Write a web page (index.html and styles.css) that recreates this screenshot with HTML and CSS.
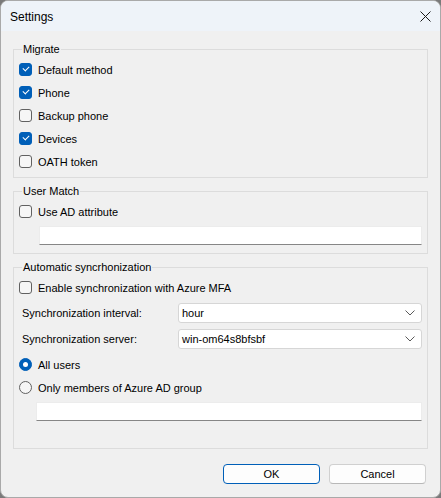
FILE: index.html
```html
<!DOCTYPE html>
<html>
<head>
<meta charset="utf-8">
<link rel="stylesheet" href="styles.css">
</head>
<body>
<div class="window">
  <div class="titlebar">
    <span class="title">Settings</span>
    <svg class="close" width="11" height="11" viewBox="0 0 11 11"><path d="M0.5 0.5 L10.5 10.5 M10.5 0.5 L0.5 10.5" stroke="#1a1a1a" stroke-width="1" fill="none"/></svg>
  </div>
  <div class="content">
    <fieldset class="group migrate">
      <legend>Migrate</legend>
      <label class="row"><span class="cb checked"></span>Default method</label>
      <label class="row"><span class="cb checked"></span>Phone</label>
      <label class="row"><span class="cb"></span>Backup phone</label>
      <label class="row"><span class="cb checked"></span>Devices</label>
      <label class="row"><span class="cb"></span>OATH token</label>
    </fieldset>
    <fieldset class="group match">
      <legend>User Match</legend>
      <label class="row"><span class="cb"></span>Use AD attribute</label>
      <div class="textbox indent20"></div>
    </fieldset>
    <fieldset class="group sync">
      <legend>Automatic syncrhonization</legend>
      <label class="row"><span class="cb"></span>Enable synchronization with Azure MFA</label>
      <div class="field first">
        <span class="flabel">Synchronization interval:</span>
        <div class="combo"><span>hour</span><svg width="10" height="6" viewBox="0 0 10 6"><path d="M0.5 0.5 L5 5 L9.5 0.5" stroke="#5a5a5a" fill="none"/></svg></div>
      </div>
      <div class="field">
        <span class="flabel">Synchronization server:</span>
        <div class="combo"><span>win-om64s8bfsbf</span><svg width="10" height="6" viewBox="0 0 10 6"><path d="M0.5 0.5 L5 5 L9.5 0.5" stroke="#5a5a5a" fill="none"/></svg></div>
      </div>
      <label class="row first-radio"><span class="rb checked"></span>All users</label>
      <label class="row"><span class="rb"></span>Only members of Azure AD group</label>
      <div class="textbox indent17"></div>
    </fieldset>
    <div class="buttons">
      <button class="btn default">OK</button>
      <button class="btn">Cancel</button>
    </div>
  </div>
</div>
</body>
</html>
```
FILE: styles.css
```css
* { box-sizing: border-box; }
html, body { margin: 0; padding: 0; background: #7a7a7a; }
body {
  font-family: "Liberation Sans", Arial, sans-serif;
  font-size: 11px;
  color: #000;
}
.window {
  width: 441px;
  height: 498px;
  background: #f0f0f0;
  border: 1px solid #a9a9a9;
  border-radius: 8px;
  overflow: hidden;
  display: flex;
  flex-direction: column;
}
.titlebar {
  height: 30px;
  background: #eef3f9;
  display: flex;
  align-items: center;
  justify-content: space-between;
  padding: 0 9px 0 9px;
  flex: none;
}
.title { font-size: 12px; padding-top: 1px; }
.content {
  padding: 10px 12px 0 12px;
  display: flex;
  flex-direction: column;
}
.group {
  margin: 0;
  border: 1px solid #dcdcdc;
  padding: 1px 5px 0 5px;
  min-width: 0;
}
.group legend {
  padding: 0 1px;
  margin-left: 3px;
  line-height: 16px;
  height: 16px;
}
.migrate { padding-bottom: 4px; }
.match { margin-top: 5px; padding-bottom: 8px; }
.sync { margin-top: 5px; padding-bottom: 27px; }
.row {
  display: flex;
  align-items: center;
  height: 23px;
  gap: 6px;
}
.cb {
  width: 13px;
  height: 13px;
  border: 1px solid #616161;
  border-radius: 3px;
  background: #f6f6f6;
  flex: none;
  position: relative;
}
.cb.checked {
  background: #005fb8;
  border-color: #005fb8;
}
.cb.checked::after {
  content: "";
  position: absolute;
  left: 3px;
  top: 2px;
  width: 5px;
  height: 3px;
  border-left: 1px solid #fff;
  border-bottom: 1px solid #fff;
  transform: rotate(-45deg);
}
.rb {
  width: 13px;
  height: 13px;
  border: 1px solid #616161;
  border-radius: 50%;
  background: #f6f6f6;
  flex: none;
  position: relative;
}
.rb.checked {
  background: #005fb8;
  border-color: #005fb8;
}
.rb.checked::after {
  content: "";
  position: absolute;
  left: 3px;
  top: 3px;
  width: 5px;
  height: 5px;
  border-radius: 50%;
  background: #fff;
}
.textbox {
  height: 19px;
  background: #fff;
  border: 1px solid #ececec;
  border-bottom: 1px solid #868686;
}
.indent20 { margin-left: 20px; margin-top: 3px; }
.indent17 { margin-left: 17px; margin-top: 3px; }
.field {
  display: flex;
  align-items: center;
  height: 20px;
  margin-top: 6px;
}
.field.first { margin-top: 4px; }
.flabel { width: 159px; padding-left: 3px; flex: none; }
.combo {
  flex: 1;
  height: 20px;
  background: #fff;
  border: 1px solid #d6d6d6;
  border-radius: 3px;
  display: flex;
  align-items: center;
  justify-content: space-between;
  padding: 0 6px 0 3px;
}
.first-radio { margin-top: 4px; }
.buttons {
  display: flex;
  justify-content: flex-end;
  gap: 9px;
  margin-top: 15px;
  padding-right: 2px;
}
.btn {
  width: 97px;
  height: 20px;
  font-family: inherit;
  font-size: 11px;
  background: #fdfdfd;
  border: 1px solid #d0d0d0;
  border-bottom-color: #b8b8b8;
  border-radius: 4px;
  padding: 0;
  color: #000;
}
.btn.default {
  border: 1px solid #005fb8;
  box-shadow: inset 0 0 0 1px #fdfdfd;
}
```
